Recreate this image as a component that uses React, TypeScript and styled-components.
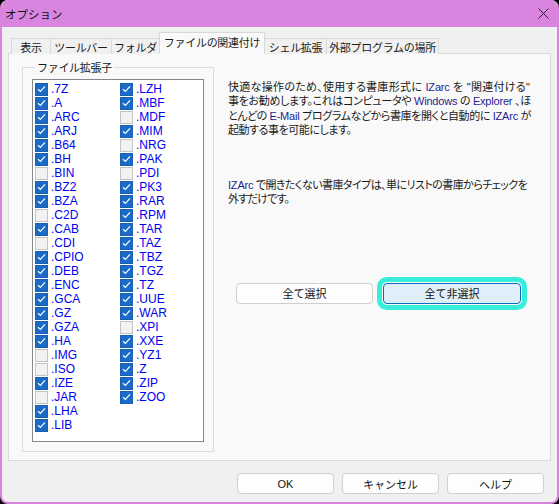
import React from "react"
import styled, { createGlobalStyle, css } from "styled-components"

const GlobalStyle = createGlobalStyle`
    html, body {
        margin: 0;
        padding: 0;
        background: #000;
    }
    body {
        font-family: "Liberation Sans", "Noto Sans CJK JP", sans-serif;
        font-size: 12px;
        color: #1a1a1a;
    }
`

const Window = styled.div`
    width: 559px;
    height: 504px;
    box-sizing: border-box;
    border: 2px solid #d985e0;
    border-top: none;
    border-radius: 8px;
    overflow: hidden;
    background: #f0f0f0;
    display: flex;
    flex-direction: column;
`

const TitleBar = styled.div`
    height: 27px;
    flex-shrink: 0;
    background: #d985e0;
    display: flex;
    align-items: center;
    justify-content: space-between;
    padding: 0 8px 0 3px;
`

const Title = styled.span`
    font-family: "Noto Sans CJK JP", sans-serif;
    font-size: 11.5px;
    color: #111;
`

const Body = styled.div`
    flex: 1;
    display: flex;
    flex-direction: column;
    padding: 6px 6px 8px 6px;
`

const TabStrip = styled.div`
    height: 21px;
    display: flex;
    align-items: flex-end;
    padding-left: 3px;
    margin-bottom: -1px;
    position: relative;
    z-index: 1;
`

const Tab = styled.div<{ $w: number; $active?: boolean }>`
    width: ${p => p.$w}px;
    height: 16px;
    box-sizing: border-box;
    display: flex;
    align-items: center;
    justify-content: center;
    font-family: "Noto Sans CJK JP", sans-serif;
    font-size: 11px;
    letter-spacing: -0.3px;
    background: #f0f0f0;
    border: 1px solid #d9d9d9;
    border-bottom: none;
    border-left: none;
    &:first-child {
        border-left: 1px solid #d9d9d9;
    }
    ${p => p.$active && css`
        height: 22px;
        background: #f9f9f9;
        border-left: 1px solid #d9d9d9;
        margin-left: -1px;
        padding-bottom: 3px;
    `}
`

const Panel = styled.div`
    flex: 1;
    background: #f9f9f9;
    border: 1px solid #d9d9d9;
    display: grid;
    grid-template-columns: 192px 1fr;
    align-items: start;
    padding: 7px 0 0 13px;
`

const GroupBox = styled.fieldset`
    margin: 0;
    height: 391px;
    box-sizing: border-box;
    border: 1px solid #dcdcdc;
    padding: 6px 9px 9px 9px;
    display: flex;
`

const Legend = styled.legend`
    font-family: "Noto Sans CJK JP", sans-serif;
    font-size: 11px;
    letter-spacing: -0.3px;
    line-height: 12px;
    padding: 0 2px;
    margin-left: 3px;
`

const ListBox = styled.div`
    flex: 1;
    background: #fff;
    border: 1px solid #828790;
    display: grid;
    grid-template-columns: 85px 1fr;
    grid-template-rows: repeat(25, 14px);
    grid-auto-flow: column;
    padding: 2px 0 0 2px;
`

const Item = styled.label`
    display: flex;
    align-items: center;
    gap: 3px;
    color: #0000f0;
    font-size: 12px;
    line-height: 14px;
`

const Box = styled.span<{ $on: boolean }>`
    width: 13px;
    height: 13px;
    box-sizing: border-box;
    display: inline-flex;
    align-items: center;
    justify-content: center;
    ${p => p.$on
        ? css`background: #1a6ac6; border: 1px solid #1a5fb0;`
        : css`background: #f2f2f2; border: 1px solid #c4c4c4;`}
`

const Side = styled.div`
    padding: 19px 0 0 14px;
`

const Desc = styled.div<{ $gap?: number }>`
    margin-top: ${p => p.$gap ?? 0}px;
    font-size: 11px;
    line-height: 14.3px;
    font-feature-settings: "palt";
    color: #1a1a1a;
    white-space: nowrap;
`

const Line = styled.span<{ $ls?: number }>`
    display: block;
    letter-spacing: ${p => p.$ls ?? -0.45}px;
`

const Word = styled.span`
    color: #1f1f90;
    letter-spacing: -0.2px;
`

const ButtonRow = styled.div`
    display: flex;
    gap: 10px;
    margin: 76px 0 0 8px;
`

const Button = styled.button<{ $w: number; $primary?: boolean }>`
    width: ${p => p.$w}px;
    height: 21px;
    box-sizing: border-box;
    border: 1px solid #d0d0d0;
    border-radius: 4px;
    background: #fdfdfd;
    font-family: "Liberation Sans", "Noto Sans CJK JP", sans-serif;
    font-size: 11px;
    color: #111;
    padding: 0;
    ${p => p.$primary && css`
        background: #e0eef9;
        border-color: #0a6cc4;
        box-shadow: 0 0 0 1px #f9f9f9, 0 0 0 6px #38eedb;
    `}
`

const Footer = styled.div`
    display: flex;
    justify-content: flex-end;
    gap: 8px;
    margin: 12px 7px 0 0;
`

const col1: [string, boolean][] = [
    [".7Z", true], [".A", true], [".ARC", true], [".ARJ", true], [".B64", true],
    [".BH", true], [".BIN", false], [".BZ2", true], [".BZA", true], [".C2D", false],
    [".CAB", true], [".CDI", false], [".CPIO", true], [".DEB", true], [".ENC", true],
    [".GCA", true], [".GZ", true], [".GZA", true], [".HA", true], [".IMG", false],
    [".ISO", false], [".IZE", true], [".JAR", false], [".LHA", true], [".LIB", true],
]

const col2: [string, boolean][] = [
    [".LZH", true], [".MBF", true], [".MDF", false], [".MIM", true], [".NRG", false],
    [".PAK", true], [".PDI", false], [".PK3", true], [".RAR", true], [".RPM", true],
    [".TAR", true], [".TAZ", true], [".TBZ", true], [".TGZ", true], [".TZ", true],
    [".UUE", true], [".WAR", true], [".XPI", false], [".XXE", true], [".YZ1", true],
    [".Z", true], [".ZIP", true], [".ZOO", true],
]

const Check: React.FC<{ on: boolean }> = ({ on }) => (
    <Box $on={on}>
        {on && (
            <svg width="9" height="8" viewBox="0 0 9 8">
                <path d="M1 4.2 L3.4 6.4 L8 1.4" fill="none" stroke="#fff" strokeWidth="1.2" />
            </svg>
        )}
    </Box>
)

const tabs: [string, number][] = [
    ["表示", 40], ["ツールバー", 61], ["フォルダ", 48],
    ["ファイルの関連付け", 106], ["シェル拡張", 62], ["外部プログラムの場所", 112],
]

const App: React.FC = () => {
    return (
        <Window>
            <GlobalStyle />
            <TitleBar>
                <Title>オプション</Title>
                <svg width="11" height="11" viewBox="0 0 11 11">
                    <path d="M0.5 0.5 L10.5 10.5 M10.5 0.5 L0.5 10.5" stroke="#222" strokeWidth="1" />
                </svg>
            </TitleBar>
            <Body>
                <TabStrip>
                    {tabs.map(([t, w], i) => (
                        <Tab key={t} $w={w} $active={i === 3}>{t}</Tab>
                    ))}
                </TabStrip>
                <Panel>
                    <GroupBox>
                        <Legend>ファイル拡張子</Legend>
                        <ListBox>
                            {[...col1, ...col2].map(([ext, on]) => (
                                <Item key={ext}>
                                    <Check on={on} />
                                    {ext}
                                </Item>
                            ))}
                        </ListBox>
                    </GroupBox>
                    <Side>
                        <Desc>
                            <Line $ls={0.3}>快適な操作のため、使用する書庫形式に <Word>IZarc</Word> を "関連付ける"</Line>
                            <Line $ls={-0.33}>事をお勧めします。これはコンピュータや <Word>Windows</Word> の <Word>Explorer</Word> 、ほ</Line>
                            <Line $ls={-0.4}>とんどの <Word>E-Mail</Word> プログラムなどから書庫を開くと自動的に <Word>IZArc</Word> が</Line>
                            <Line>起動する事を可能にします。</Line>
                        </Desc>
                        <Desc $gap={41}>
                            <Line $ls={-0.55}><Word>IZArc</Word> で開きたくない書庫タイプは、単にリストの書庫からチェックを</Line>
                            <Line $ls={-0.9}>外すだけです。</Line>
                        </Desc>
                        <ButtonRow>
                            <Button $w={137}>全て選択</Button>
                            <Button $w={138} $primary>全て非選択</Button>
                        </ButtonRow>
                    </Side>
                </Panel>
                <Footer>
                    <Button $w={97}>OK</Button>
                    <Button $w={97}>キャンセル</Button>
                    <Button $w={97}>ヘルプ</Button>
                </Footer>
            </Body>
        </Window>
    )
}

export default App
